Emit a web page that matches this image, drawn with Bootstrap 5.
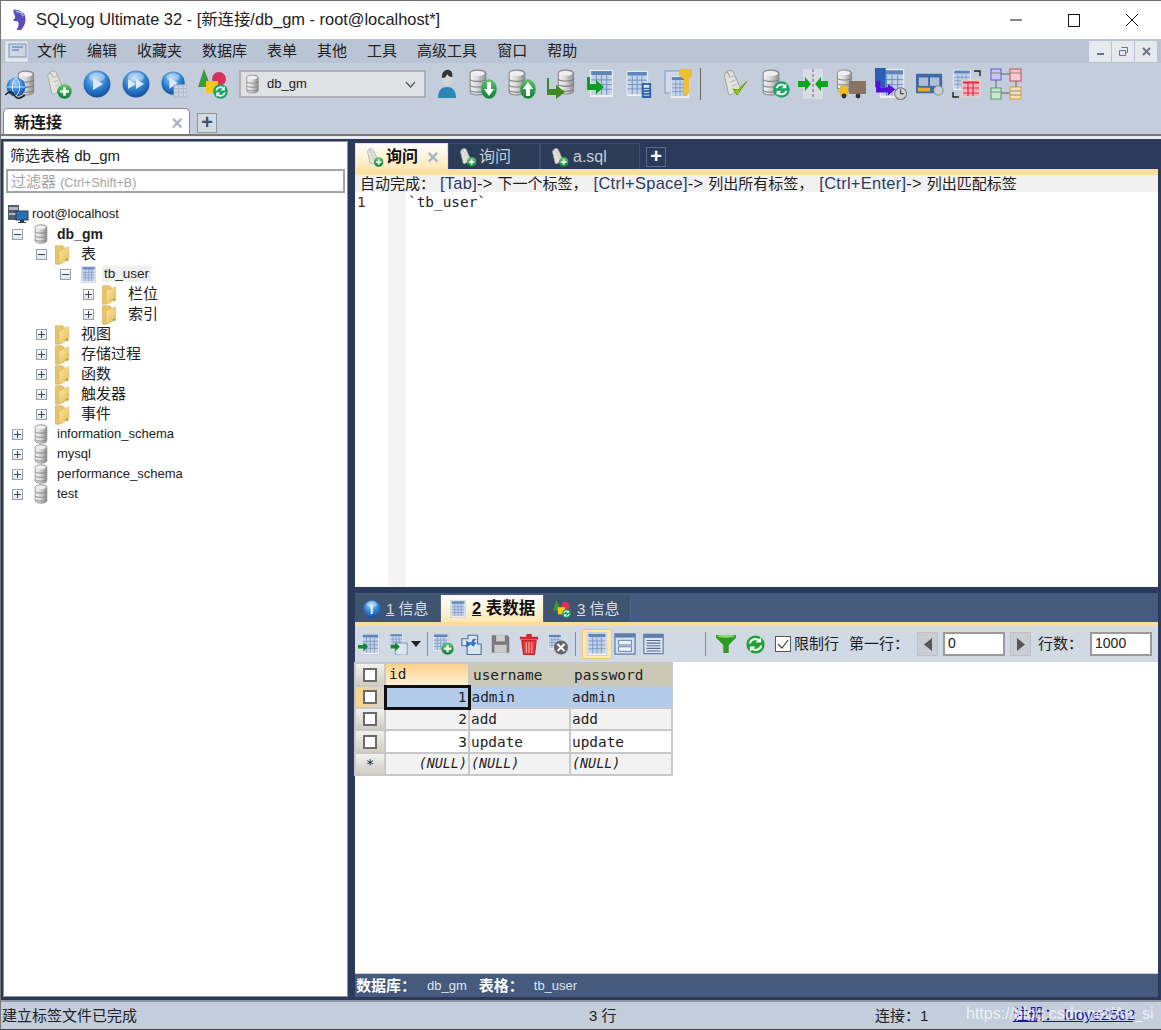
<!DOCTYPE html>
<html lang="zh-CN">
<head>
<meta charset="utf-8">
<title>SQLyog Ultimate 32</title>
<link href="https://cdn.jsdelivr.net/npm/bootstrap@5.3.0/dist/css/bootstrap.min.css" rel="stylesheet">
<style>
html,body{height:100%;overflow:hidden}
body{font-family:"Liberation Sans","Noto Sans CJK SC",sans-serif;font-size:15px;color:#1c1c1c;background:#c3cddb;line-height:1.2}
.defs-svg{display:block;height:0;width:0}
svg{flex:none}
.toolbar svg,.rtool svg,.tree svg,.qtab svg,.rtab svg{filter:blur(.35px)}
.app{height:1030px;width:1161px;border-top:1px solid #6d6d6d;border-left:1px solid #777;border-bottom:1px solid #444;position:relative}
.titlebar{height:38px;background:#fff;font-size:16.4px;color:#222}
.app-ico{margin:0 7px 0 9px}
.win-ctl{width:58px;height:38px}
.menubar{height:24px;background:#b9c4d4}
.menu-ico{margin:0 9px 0 4px}
.menus{gap:20px}
.menu-item{font-size:15px;color:#222}
.mdi-btn{width:22px;height:21px;background:#e6e9ee;color:#667;font-size:11px;margin-left:1px}
.toolbar{height:42px;background:#c3cddb;padding-left:4px;gap:11px}
.tb-group{gap:10px}
.tb-group2{gap:8px;margin-left:10px}
.tb-sep{width:1px;height:32px;background:#666;margin-left:-6px}
.combo{width:187px;height:28px;background:#dfe1e3;border:2px solid #adb0b4;font-size:13px;padding:0 8px 0 5px;color:#222;margin-right:-2px}
.conn-tabs{height:31px;background:#c3cddb;padding-left:2px;border-bottom:2px solid #777}
.conn-tab{width:187px;height:26px;background:#fff;border-radius:5px 5px 0 0;border:1px solid #888;border-bottom:0;font-weight:700;font-size:16px;padding:3px 6px 0 10px}
.tab-x{color:#a8b4c8;font-size:20px;font-weight:700;line-height:1}
.plus-btn{width:20px;height:20px;background:#d5dae2;border:1px solid #8e96a4;color:#3e4f6c;font-size:20px;line-height:16px;text-align:center;font-weight:700}
.plus-conn{margin:0 0 1px 7px}
.plus-q{margin:0 0 2px 6px;background:transparent;border-color:#5a6b88;color:#fff}
.workspace{height:864px;background:#2b3a5b;border-top:3px solid #e9ebef;padding:3px 3px 3px 2px;gap:7px}
.left-pane{width:345px;background:#fff;border:1px solid #8a93a3;color:#222;margin-top:-1px}
.filter-title{height:27px;padding:5px 0 0 6px;font-size:15px}
.filter-input{height:24px;margin:0 2px 0 2px;border:2px solid #a5a5a5;color:#a4a4a4;font-size:15px;padding:1px 3px 0;line-height:20px}
.filter-hint{font-size:12.6px}
.tree{padding-top:11px;font-size:13px}
.tree-row{height:20px}
.root-row{padding-left:3px}
.root-ico{margin-right:3px}
.lv1{padding-left:8px}.lv2{padding-left:32px}.lv3{padding-left:56px}.lv4{padding-left:79px}
.exp{width:11px;height:11px;border:1px solid #9aa2ad;background:linear-gradient(#fff,#dfe3e8);flex:none;position:relative;margin-right:11px}
.exp::before{content:"";position:absolute;left:1px;right:1px;top:4px;height:1px;background:#445}
.exp.pl::after{content:"";position:absolute;top:1px;bottom:1px;left:4px;width:1px;background:#445}
.fold-i{margin:0 10px 0 -4px}
.db-i{margin-right:9px}
.tb-i{margin:0 6px 0 -1px}
.cj{font-size:15px}
.dbname{font-size:14px}
.sel-name{background:#f0f0f0;padding:0 2px;font-size:13.5px}
.right-pane{width:803px;min-width:0}
.qtabs{height:27px;align-items:flex-end;flex:none}
.qtab{height:26px;border:1px solid #3e4e6c;border-bottom:0;background:#2c3c58;color:#c4ccd8;font-size:16px;gap:1px;padding-left:9px}
.qtab.on{background:linear-gradient(#fff,#fde7b2);color:#111;font-weight:700;border-color:#fde0a0}
.w93{width:93px}.w92{width:92px}.w100{width:100px}
.stripe{height:6px;background:#fde0a0;flex:none}
.hint{height:17px;background:#f1f1f1;font-size:15px;padding-left:5px;white-space:nowrap;line-height:17px;flex:none}
.lat{font-size:16.4px;letter-spacing:.3px}
.lat .br{color:#2a3a6a}
.hsp1{margin-left:5px}.hsp2{margin-left:6px}
.editor{height:395px;background:#fff;flex:none;font-family:"DejaVu Sans Mono",monospace;font-size:14.4px}
.gutter{width:33px;color:#642020;padding:2px 0 0 2px}
.marg{width:18px;background:#f4f4f4}
.code{padding:2px 0 0 2px;color:#222}
.divider{height:6px;background:#2b3a5b;flex:none}
.rtabs{height:29px;background:#455a7c;align-items:flex-end;flex:none}
.rtab{height:27px;background:#3f546f;color:#d7deea;font-size:15px;padding-left:8px;gap:5px;border-right:1px solid #4f6485}
.rtab.on{background:linear-gradient(#fff,#fde7b2);color:#111;font-weight:700;font-size:16.5px}
.w86{width:86px}.w103{width:103px}.w87{width:87px}
.stripe2{height:4px;background:#fddc96;flex:none}
.rtool{height:36px;background:#d1d9e5;flex:none;padding-left:3px;white-space:nowrap}
.rsep{width:1px;height:24px;background:#8a8f96}
.ml2{margin-left:2px}.ml3{margin-left:3px}.ml4{margin-left:4px}.ml5{margin-left:5px}.ml6{margin-left:6px}.ml7{margin-left:7px}.ml8{margin-left:8px}.ml10{margin-left:10px}.ml11{margin-left:11px}.ml12{margin-left:12px}.ml41{margin-left:41px}
.hl-btn{background:#fbe6b4;border:1px solid #eec873;padding:2px 2px;width:30px;height:30px}
.spin{width:21px;height:24px;background:#c9ccd0;border:1px solid #bdc0c4;flex:none}
.num-input{height:24px;background:#fff;border:2px solid #9a9a9a;font-size:14px;padding-left:3px;line-height:19px;color:#222}
.w62{width:62px}
.gridwrap{height:311px;background:#fff;flex:none}
.dgrid{width:317px;border-collapse:collapse;table-layout:fixed;font-family:"DejaVu Sans Mono",monospace;font-size:14.4px;margin:0 0 0 -1px;color:#222}
.c0{width:30px}.c1{width:84px}.c2{width:101px}.c3{width:102px}
.dgrid td,.dgrid th{border:2px solid #c8c8c8;height:22px;padding:0 1px;font-weight:400;line-height:18px;overflow:hidden;vertical-align:middle}
.dgrid thead th{height:23px}
.dgrid tbody tr:nth-child(3) td{height:23px}
.rh,.dgrid th.rh{background:linear-gradient(#f2f1ee,#cfcdc4);text-align:center}
.sel-row td.rh.cur{background:linear-gradient(90deg,#fbd48a,#d7d5cc)}
.chk{display:block;width:14px;height:14px;background:#fff;border:2px solid #6a6a6a;margin:0 auto}
.dgrid th.colh{background:#cbc8b8;padding-left:3px}
.dgrid th.colh.act{background:linear-gradient(#fbd18a,#fff1d6)}
.sel-row td{background:#b4ccec}
.dgrid td.cell-act{border:3px solid #111;background:#b4ccec}
.alt td{background:#f2f2f2}
.alt td.rh{background:linear-gradient(#f2f1ee,#cfcdc4)}
.nul{font-style:italic;font-size:13.4px}
.rfoot{height:24px;background:#455a7c;color:#dfe5ee;font-size:13px;flex:none;border-top:1px solid #c9ced6;padding-left:1px}
.rfoot b{font-size:15px;color:#fff}
.statusbar{height:29px;background:#c3cddb;border-top:2px solid #8d96a4;font-size:15px;color:#222}
.st-a{width:588px;padding-left:1px}.st-b{width:286px}.st-c{width:138px}
.reg-link{color:#1a1a9c;text-decoration:underline;font-size:15.5px}
.wm{position:absolute;left:965px;top:1003px;color:rgba(255,255,255,.72);font-size:16px;white-space:nowrap}
</style>
</head>
<body>
<svg class="defs-svg" width="0" height="0" aria-hidden="true">
<defs>
<linearGradient id="gs" x1="0" x2="1" y1="0" y2="0"><stop offset="0" stop-color="#f2f2f2"/><stop offset=".45" stop-color="#d9d9d9"/><stop offset="1" stop-color="#8e8e8e"/></linearGradient>
<radialGradient id="gb" cx=".45" cy=".3" r=".8"><stop offset="0" stop-color="#a6d4f7"/><stop offset=".5" stop-color="#2f7fd0"/><stop offset="1" stop-color="#0d3f8e"/></radialGradient>
<linearGradient id="gy" x1="0" x2="1" y1="0" y2="1"><stop offset="0" stop-color="#fbe9a6"/><stop offset="1" stop-color="#e5b850"/></linearGradient>
<linearGradient id="gg" x1="0" x2="0" y1="0" y2="1"><stop offset="0" stop-color="#62c36c"/><stop offset="1" stop-color="#0c7f38"/></linearGradient>
</defs>
<symbol id="db" viewBox="0 0 16 24"><path d="M1 4c0-2 3-3 7-3s7 1 7 3v16c0 2-3 3-7 3s-7-1-7-3z" fill="url(#gs)" stroke="#8c8c8c"/><ellipse cx="8" cy="4" rx="6" ry="2.2" fill="#efefef"/><path d="M1 9.5c2 2 12 2 14 0M1 14.5c2 2 12 2 14 0M1 19c2 2 12 2 14 0" fill="none" stroke="#7d7d7d"/></symbol>
<symbol id="ball" viewBox="0 0 28 28"><circle cx="14" cy="14" r="13.5" fill="url(#gb)"/><ellipse cx="14" cy="7" rx="8" ry="4.5" fill="#fff" opacity=".35"/></symbol>
<symbol id="bplus" viewBox="0 0 14 14"><circle cx="7" cy="7" r="6.8" fill="url(#gg)"/><path d="M3 7h8M7 3v8" stroke="#fff" stroke-width="2.4"/></symbol>
<symbol id="bdown" viewBox="0 0 16 20"><ellipse cx="8" cy="10" rx="7.8" ry="9.8" fill="url(#gg)"/><path d="M6 3h4v7h3l-5 7-5-7h3z" fill="#fff"/></symbol>
<symbol id="bup" viewBox="0 0 16 20"><ellipse cx="8" cy="10" rx="7.8" ry="9.8" fill="url(#gg)"/><path d="M6 17h4v-7h3L8 3l-5 7h3z" fill="#fff"/></symbol>
<symbol id="bref" viewBox="0 0 14 14"><circle cx="7" cy="7" r="6.8" fill="#22a06a"/><path d="M3 6a4 4 0 0 1 7-1.5M11 8a4 4 0 0 1-7 1.5" fill="none" stroke="#e8fff0" stroke-width="1.6"/><path d="M11 2v4H7zM3 12V8h4z" fill="#e8fff0"/></symbol>
<symbol id="tbl" viewBox="0 0 24 28"><rect x=".5" y=".5" width="23" height="27" fill="#eef1f6" stroke="#c9ced6"/><rect x="2" y="2" width="20" height="4" fill="#5f86bb"/><path d="M2 6h20v19H2z" fill="#c3d2e8"/><path d="M2 10.5h20M2 15h20M2 19.5h20M7 6v19M12 6v19M17 6v19" stroke="#6d8fbd" stroke-width=".9"/></symbol>
<symbol id="scroll" viewBox="0 0 18 26"><path d="M3 3c2-3 6-2 7 0l6 14c1 3-2 5-4 4L8 24c-2 1-3-1-3-2L2 9C1 7 1 5 3 3z" fill="#e2e2dd" stroke="#a8a8a8"/><path d="M3 3c2 0 3 2 3 4" fill="none" stroke="#999"/><path d="M6 8l5-2M7 12l5-2M9 16l4-2" stroke="#bbb"/></symbol>
<symbol id="fold" viewBox="0 0 18 24"><path d="M1 2h8l2 2v16l-6 3H1z" fill="#e9c565" stroke="#c7a044" stroke-width=".6"/><path d="M5 8l11-5v15l-11 5z" fill="url(#gy)" stroke="#d2aa4d" stroke-width=".5"/><circle cx="14.5" cy="18" r="1.2" fill="#55a955"/></symbol>
<symbol id="srv" viewBox="0 0 22 20"><rect x="1" y="1" width="11" height="15" fill="#555d68"/><rect x="2" y="3" width="9" height="3" fill="#aeb5be"/><rect x="2" y="9" width="9" height="2" fill="#aeb5be"/><rect x="9" y="7" width="12" height="9" fill="#2b6fb7" stroke="#2a3c55"/><path d="M13 16h4v2h2v1h-8v-1h2z" fill="#2a3c55"/></symbol>

<symbol id="i-conn" viewBox="0 0 30 30"><use href="#db" x="12" y="1" width="18" height="26"/><circle cx="11" cy="18" r="9.5" fill="url(#gb)"/><path d="M2 18h18M11 9c-5 5-5 13 0 18M11 9c5 5 5 13 0 18" stroke="#e8f2ff" fill="none" stroke-width=".9"/><path d="M0 26c5-5 8-3 10 1s6 2 10-1" stroke="#222" fill="none" stroke-width="1.6"/></symbol>
<symbol id="i-newq" viewBox="0 0 26 30"><use href="#scroll" x="0" y="1" width="19" height="26"/><use href="#bplus" x="11" y="15" width="15" height="15"/></symbol>
<symbol id="i-play" viewBox="0 0 28 28"><use href="#ball" width="28" height="28"/><path d="M10 8l10 6-10 6z" fill="#dfeaf8"/></symbol>
<symbol id="i-play2" viewBox="0 0 28 28"><use href="#ball" width="28" height="28"/><path d="M6 9l8 5-8 5zM14 9l8 5-8 5z" fill="#dfeaf8"/></symbol>
<symbol id="i-playt" viewBox="0 0 28 28"><use href="#ball" x="0" y="0" width="26" height="26"/><path d="M9 7l9 6-9 6z" fill="#dfeaf8"/><rect x="14" y="15" width="14" height="13" fill="#c9d4e6" stroke="#a9b4c8"/><path d="M14 19h14M14 23h14M19 15v13M24 15v13" stroke="#a9b4c8"/></symbol>
<symbol id="i-shape" viewBox="0 0 30 30"><path d="M6 0l7 18H0z" fill="#3a9a3c"/><circle cx="21" cy="10" r="7" fill="#d8315a"/><rect x="8" y="12" width="12" height="12" fill="#f5c61b"/><use href="#bref" x="15" y="15" width="15" height="15"/></symbol>
<symbol id="i-user" viewBox="0 0 24 30"><path d="M3 29c0-8 4-11 9-11s9 3 9 11z" fill="#2f86b5"/><ellipse cx="12" cy="10" rx="5" ry="7.5" fill="#d5d5d5"/><path d="M7 9c-1-6 4-9 7-8s4 4 3 7c-3 0-4-2-5-3-1 3-2 4-5 4z" fill="#333"/></symbol>
<symbol id="i-dbdown" viewBox="0 0 28 30"><use href="#db" width="18" height="27"/><use href="#bdown" x="12" y="10" width="16" height="20"/></symbol>
<symbol id="i-dbup" viewBox="0 0 28 30"><use href="#db" width="18" height="27"/><use href="#bup" x="12" y="10" width="16" height="20"/></symbol>
<symbol id="i-dbarr" viewBox="0 0 28 30"><use href="#db" x="10" width="18" height="26"/><path d="M2 9v11h7v-4l9 7-9 7v-4H0V9z" fill="#3f8a1e"/></symbol>
<symbol id="i-tbarr" viewBox="0 0 28 30"><use href="#tbl" x="3" y="0" width="25" height="29"/><path d="M1 8h3v7h6v-4l8 7-8 7v-4H1z" fill="#0f9c22"/></symbol>
<symbol id="i-tbcalc" viewBox="0 0 30 30"><use href="#tbl" width="26" height="29"/><rect x="18" y="14" width="10" height="16" fill="#2d62a8"/><rect x="20" y="16" width="6" height="3" fill="#dfe9f7"/><path d="M20 21h6M20 24h6M20 27h6" stroke="#e3e9f3"/></symbol>
<symbol id="i-tbkey" viewBox="0 0 30 30"><rect x="1" y="2" width="20" height="22" fill="#cfdbeb" stroke="#7e9ac2"/><use href="#tbl" x="6" y="6" width="20" height="24"/><path d="M15 0h13v7l-3 3v14l-3 3-2-2V10l-5-3z" fill="#edbf32"/></symbol>
<symbol id="i-check" viewBox="0 0 28 30"><use href="#scroll" x="0" width="19" height="28"/><path d="M10 20l4 6 10-14-9 9z" fill="#8fc820" stroke="#6ea000"/></symbol>
<symbol id="i-dbref" viewBox="0 0 30 30"><use href="#db" x="2" width="18" height="27"/><use href="#bref" x="13" y="12" width="17" height="17"/></symbol>
<symbol id="i-sync" viewBox="0 0 30 30"><rect x="5" width="20" height="30" fill="#d8dde4"/><path d="M15 0v30" stroke="#667" stroke-dasharray="3 2"/><path d="M0 12h7V8l6 7-6 7v-4H0zM30 12h-7V8l-6 7 6 7v-4h7z" fill="#0ea51c"/></symbol>
<symbol id="i-truck" viewBox="0 0 30 30"><use href="#db" x="0" y="0" width="17" height="24"/><rect x="13" y="12" width="17" height="13" fill="#8a7563"/><path d="M4 17h8v10H4z" fill="#f0bd1e"/><circle cx="8" cy="27" r="2.4" fill="#333"/><circle cx="22" cy="27" r="2.4" fill="#333"/></symbol>
<symbol id="i-sched" viewBox="0 0 30 30"><use href="#tbl" x="2" width="28" height="29"/><rect width="10" height="18" fill="#2a5fb5"/><path d="M1 12h4v6h7v-3l7 5-7 6v-3H1z" fill="#5010d8"/><circle cx="24" cy="24" r="5.5" fill="#cfd2d6" stroke="#777"/><path d="M24 20v4h3" stroke="#444" fill="none"/></symbol>
<symbol id="i-card" viewBox="0 0 30 26"><rect y="2" width="28" height="21" rx="1" fill="#3f6aa6"/><rect x="3" y="6" width="10" height="9" fill="#aebfd6"/><rect x="15" y="6" width="10" height="9" fill="#aebfd6"/><rect x="2" y="17" width="13" height="4" fill="#e5ae26"/><circle cx="24" cy="20" r="5" fill="#c8ccd2" stroke="#888"/></symbol>
<symbol id="i-red" viewBox="0 0 30 30"><use href="#tbl" x="0" width="20" height="22"/><rect x="10" y="11" width="18" height="17" fill="#f5b3bd" stroke="#ddd"/><path d="M11 14h16M11 19h16M11 24h16M16 13v14M21 13v14M11 13h16" stroke="#e72b3c" stroke-width="1.2"/><path d="M22 2h6v5M1 23v5h6" fill="none" stroke="#222" stroke-width="1.4"/></symbol>
<symbol id="i-schema" viewBox="0 0 32 32"><rect x="1" y="1" width="10" height="11" fill="#c8c6ef" stroke="#5f57d2"/><rect x="20" y="1" width="11" height="12" fill="#f3c9cd" stroke="#c64d56"/><rect x="1" y="20" width="10" height="11" fill="#cbe6d2" stroke="#4ca266"/><rect x="20" y="19" width="11" height="12" fill="#f8dfb4" stroke="#e09a2f"/><path d="M11 6h9M6 12v8M26 13v6M11 25h9" stroke="#666"/><path d="M1 5h10M20 5h11M1 24h10M20 23h11M20 27h11" stroke="#888"/></symbol>

<symbol id="r-add" viewBox="0 0 24 24"><use href="#tbl" x="3" width="21" height="24"/><path d="M0 13h6v-3l5 5-5 5v-3H0z" fill="#0e8c26"/></symbol>
<symbol id="r-copy" viewBox="0 0 24 24"><use href="#tbl" x="0" width="20" height="18"/><rect x="9" y="11" width="13" height="13" fill="#dfe5ee" stroke="#7f94b4"/><path d="M4 13h5v-3l5 5-5 5v-3H4z" fill="#0e8c26"/></symbol>
<symbol id="r-plus" viewBox="0 0 24 24"><use href="#tbl" width="19" height="21"/><use href="#bplus" x="10" y="10" width="14" height="14"/></symbol>
<symbol id="r-dup" viewBox="0 0 24 24"><path d="M8 2h11v10h4v12H7V14H1V6h7z" fill="#dbe4f1" stroke="#4c6d9e" stroke-width="1.2"/><path d="M6 14v-6l6 4-6 4" fill="#2f6fbd"/><path d="M16 6c-3 0-4 2-4 4h-3l5 5 4-5h-3c0-2 1-3 3-3z" fill="#3b78bb"/></symbol>
<symbol id="r-save" viewBox="0 0 24 24"><path d="M2 2h18l2 2v18H2z" fill="#7b7b7b"/><rect x="7" y="2" width="10" height="7" fill="#cfcfcf"/><rect x="5" y="13" width="14" height="9" fill="#cbcbcb"/></symbol>
<symbol id="r-trash" viewBox="0 0 22 24"><path d="M8 1h6v3h7v3H1V4h7z" fill="#d9252a"/><path d="M3 8h16l-2 16H5z" fill="#e8343a" stroke="#b31a1e"/><path d="M8 10v12M11 10v12M14 10v12" stroke="#fbb" stroke-width="1.2"/></symbol>
<symbol id="r-x" viewBox="0 0 24 24"><use href="#tbl" width="18" height="19"/><circle cx="16" cy="16" r="8" fill="#666"/><path d="M12 12l8 8M20 12l-8 8" stroke="#fff" stroke-width="2.2"/></symbol>
<symbol id="r-form" viewBox="0 0 24 24"><rect x="1" y="1" width="22" height="22" fill="#d5dff0" stroke="#5f7fa8" stroke-width="1.4"/><rect x="1" y="1" width="22" height="4" fill="#5f7fa8"/><rect x="5" y="8" width="14" height="5" fill="#eef3fb" stroke="#5f7fa8"/><rect x="5" y="15" width="14" height="5" fill="#eef3fb" stroke="#5f7fa8"/></symbol>
<symbol id="r-text" viewBox="0 0 24 24"><rect x="1" y="1" width="22" height="22" fill="#dde5f1" stroke="#5f7fa8" stroke-width="1.4"/><rect x="1" y="1" width="22" height="4" fill="#5f7fa8"/><path d="M4 8h16M4 11h16M4 14h16M4 17h16M4 20h16" stroke="#56708f" stroke-width="1.2"/></symbol>
<symbol id="r-funnel" viewBox="0 0 22 22"><path d="M0 1h22v3l-8 8v9H8v-9L0 4z" fill="#2e9a1f"/><ellipse cx="11" cy="2.5" rx="10" ry="1.7" fill="#8ed86f"/></symbol>
<symbol id="r-refresh" viewBox="0 0 20 20"><circle cx="10" cy="10" r="9.6" fill="#21a03a"/><path d="M4 9a6 6 0 0 1 10-3M16 11a6 6 0 0 1-10 3" fill="none" stroke="#eaffea" stroke-width="2.2"/><path d="M16 2v6h-6zM4 18v-6h6z" fill="#eaffea"/></symbol>
</svg>

<div class="app d-flex flex-column">
  <header class="titlebar d-flex align-items-center">
    <svg class="app-ico" width="19" height="24" viewBox="0 0 20 24"><path d="M4 1c5 0 11 3 12 7s0 9-3 13c-1 2-4 2-6 1 2-3 3-6 1-9-2 1-4 0-5-1 2-1 3-2 2-5-1-2-2-4-1-6z" fill="#5a4fb8"/><path d="M6 3c4 0 7 2 8 5" stroke="#b6b2e6" fill="none" stroke-width="1.5"/></svg>
    <span>SQLyog Ultimate 32 - [新连接/db_gm - root@localhost*]</span>
    <div class="ms-auto d-flex align-items-center">
      <div class="win-ctl d-flex align-items-center justify-content-center"><svg width="12" height="2"><path d="M0 1h12" stroke="#111"/></svg></div>
      <div class="win-ctl d-flex align-items-center justify-content-center"><svg width="12" height="13"><rect x=".5" y=".5" width="11" height="12" fill="none" stroke="#111"/></svg></div>
      <div class="win-ctl d-flex align-items-center justify-content-center"><svg width="14" height="14"><path d="M1 1l12 12M13 1L1 13" stroke="#111"/></svg></div>
    </div>
  </header>

  <nav class="menubar d-flex align-items-center">
    <svg class="menu-ico" width="23" height="21" viewBox="0 0 23 21"><rect x="1" y="1" width="21" height="19" fill="#dfe5ee" stroke="#eef1f5"/><rect x="4" y="3" width="17" height="13" fill="#cdd6e3" stroke="#7f8fa8"/><path d="M7 6h11M7 9h7" stroke="#3f6fb0"/></svg>
    <div class="d-flex menus">
      <span class="menu-item">文件</span><span class="menu-item">编辑</span><span class="menu-item">收藏夹</span><span class="menu-item">数据库</span><span class="menu-item">表单</span><span class="menu-item">其他</span><span class="menu-item">工具</span><span class="menu-item">高级工具</span><span class="menu-item">窗口</span><span class="menu-item">帮助</span>
    </div>
    <div class="ms-auto d-flex me-1">
      <div class="mdi-btn d-flex align-items-center justify-content-center"><svg width="9" height="9"><rect x="1" y="6" width="7" height="2" fill="#6c7480"/></svg></div>
      <div class="mdi-btn d-flex align-items-center justify-content-center"><svg width="11" height="11"><path d="M3.5 1.5h6v5h-2M1.5 4.5h6v5h-6z" fill="none" stroke="#6c7480"/></svg></div>
      <div class="mdi-btn d-flex align-items-center justify-content-center"><svg width="9" height="9"><path d="M1 1l7 7M8 1L1 8" stroke="#6c7480" stroke-width="2"/></svg></div>
    </div>
  </nav>

  <div class="toolbar d-flex align-items-center">
    <svg width="30" height="30"><use href="#i-conn"/></svg>
    <svg width="26" height="30"><use href="#i-newq"/></svg>
    <svg width="28" height="28"><use href="#i-play"/></svg>
    <svg width="28" height="28"><use href="#i-play2"/></svg>
    <svg width="26" height="28"><use href="#i-playt"/></svg>
    <svg width="30" height="30"><use href="#i-shape"/></svg>
    <div class="combo d-flex align-items-center">
      <svg class="me-2" width="13" height="20"><use href="#db"/></svg><span>db_gm</span>
      <svg class="ms-auto" width="11" height="7"><path d="M1 1l4.5 5L10 1" fill="none" stroke="#555" stroke-width="1.2"/></svg>
    </div>
    <div class="d-flex align-items-center tb-group">
      <svg width="24" height="30"><use href="#i-user"/></svg>
      <svg width="28" height="30"><use href="#i-dbdown"/></svg>
      <svg width="30" height="30"><use href="#i-dbup"/></svg>
      <svg width="28" height="30"><use href="#i-dbarr"/></svg>
      <svg width="30" height="30"><use href="#i-tbarr"/></svg>
      <svg width="28" height="30"><use href="#i-tbcalc"/></svg>
      <svg width="32" height="30"><use href="#i-tbkey"/></svg>
    </div>
    <span class="tb-sep"></span>
    <div class="d-flex align-items-center tb-group2">
      <svg width="30" height="30"><use href="#i-check"/></svg>
      <svg width="30" height="30"><use href="#i-dbref"/></svg>
      <svg width="30" height="30"><use href="#i-sync"/></svg>
      <svg width="30" height="30"><use href="#i-truck"/></svg>
      <svg width="34" height="32"><use href="#i-sched"/></svg>
      <svg width="28" height="26"><use href="#i-card"/></svg>
      <svg width="30" height="30"><use href="#i-red"/></svg>
      <svg width="32" height="32"><use href="#i-schema"/></svg>
    </div>
  </div>

  <div class="conn-tabs d-flex align-items-end">
    <div class="conn-tab d-flex align-items-center justify-content-between"><span>新连接</span><span class="tab-x">×</span></div>
    <div class="plus-btn plus-conn">+</div>
  </div>

  <main class="workspace d-flex">
    <aside class="left-pane d-flex flex-column">
      <div class="filter-title">筛选表格 db_gm</div>
      <div class="filter-input">过滤器 <span class="filter-hint">(Ctrl+Shift+B)</span></div>
      <div class="tree">
        <div class="tree-row d-flex align-items-center root-row"><svg class="root-ico" width="22" height="20"><use href="#srv"/></svg><span>root@localhost</span></div>
        <div class="tree-row d-flex align-items-center lv1"><i class="exp"></i><svg class="db-i" width="14" height="20"><use href="#db"/></svg><b class="dbname">db_gm</b></div>
        <div class="tree-row d-flex align-items-center lv2"><i class="exp"></i><svg class="fold-i" width="17" height="21"><use href="#fold"/></svg><span class="cj">表</span></div>
        <div class="tree-row d-flex align-items-center lv3"><i class="exp"></i><svg class="tb-i" width="15" height="17"><use href="#tbl"/></svg><span class="sel-name">tb_user</span></div>
        <div class="tree-row d-flex align-items-center lv4"><i class="exp pl"></i><svg class="fold-i" width="17" height="21"><use href="#fold"/></svg><span class="cj">栏位</span></div>
        <div class="tree-row d-flex align-items-center lv4"><i class="exp pl"></i><svg class="fold-i" width="17" height="21"><use href="#fold"/></svg><span class="cj">索引</span></div>
        <div class="tree-row d-flex align-items-center lv2"><i class="exp pl"></i><svg class="fold-i" width="17" height="21"><use href="#fold"/></svg><span class="cj">视图</span></div>
        <div class="tree-row d-flex align-items-center lv2"><i class="exp pl"></i><svg class="fold-i" width="17" height="21"><use href="#fold"/></svg><span class="cj">存储过程</span></div>
        <div class="tree-row d-flex align-items-center lv2"><i class="exp pl"></i><svg class="fold-i" width="17" height="21"><use href="#fold"/></svg><span class="cj">函数</span></div>
        <div class="tree-row d-flex align-items-center lv2"><i class="exp pl"></i><svg class="fold-i" width="17" height="21"><use href="#fold"/></svg><span class="cj">触发器</span></div>
        <div class="tree-row d-flex align-items-center lv2"><i class="exp pl"></i><svg class="fold-i" width="17" height="21"><use href="#fold"/></svg><span class="cj">事件</span></div>
        <div class="tree-row d-flex align-items-center lv1"><i class="exp pl"></i><svg class="db-i" width="14" height="20"><use href="#db"/></svg><span>information_schema</span></div>
        <div class="tree-row d-flex align-items-center lv1"><i class="exp pl"></i><svg class="db-i" width="14" height="20"><use href="#db"/></svg><span>mysql</span></div>
        <div class="tree-row d-flex align-items-center lv1"><i class="exp pl"></i><svg class="db-i" width="14" height="20"><use href="#db"/></svg><span>performance_schema</span></div>
        <div class="tree-row d-flex align-items-center lv1"><i class="exp pl"></i><svg class="db-i" width="14" height="20"><use href="#db"/></svg><span>test</span></div>
      </div>
    </aside>

    <section class="right-pane d-flex flex-column">
      <div class="qtabs d-flex">
        <div class="qtab on w93 d-flex align-items-center"><svg width="20" height="20"><use href="#i-newq"/></svg><span>询问</span><span class="tab-x ms-2">×</span></div>
        <div class="qtab w92 d-flex align-items-center"><svg width="20" height="20"><use href="#i-newq"/></svg><span>询问</span></div>
        <div class="qtab w100 d-flex align-items-center"><svg width="20" height="20"><use href="#i-newq"/></svg><span class="ml2">a.sql</span></div>
        <div class="plus-btn plus-q">+</div>
      </div>
      <div class="stripe"></div>
      <div class="hint">自动完成：<span class="lat hsp1"><span class="br">[Tab]</span>-&gt; </span>下一个标签，<span class="lat hsp2"><span class="br">[Ctrl+Space]</span>-&gt; </span>列出所有标签，<span class="lat hsp2"><span class="br">[Ctrl+Enter]</span>-&gt; </span>列出匹配标签</div>
      <div class="editor d-flex">
        <div class="gutter">1</div>
        <div class="marg"></div>
        <div class="code">`tb_user`</div>
      </div>
      <div class="divider"></div>
      <div class="rtabs d-flex">
        <div class="rtab w86 d-flex align-items-center"><svg width="18" height="18"><use href="#ball"/><text x="7" y="14" font-size="12" font-weight="700" fill="#fff">i</text></svg><span><u>1</u> 信息</span></div>
        <div class="rtab on w103 d-flex align-items-center"><svg width="18" height="18"><use href="#tbl"/></svg><span><u>2</u> 表数据</span></div>
        <div class="rtab w87 d-flex align-items-center"><svg width="20" height="18"><use href="#i-shape"/></svg><span><u>3</u> 信息</span></div>
      </div>
      <div class="stripe2"></div>
      <div class="rtool d-flex align-items-center">
        <svg width="22" height="22"><use href="#r-add"/></svg>
        <svg width="22" height="22" class="ml7"><use href="#r-copy"/></svg>
        <svg width="10" height="6" class="ml2"><path d="M0 0h10L5 6z" fill="#222"/></svg>
        <span class="rsep ml6"></span>
        <svg width="22" height="22" class="ml4"><use href="#r-plus"/></svg>
        <svg width="21" height="22" class="ml7"><use href="#r-dup"/></svg>
        <svg width="21" height="22" class="ml8"><use href="#r-save"/></svg>
        <svg width="20" height="22" class="ml8"><use href="#r-trash"/></svg>
        <svg width="21" height="22" class="ml8"><use href="#r-x"/></svg>
        <span class="rsep ml7"></span>
        <span class="hl-btn d-flex ml6"><svg width="24" height="24"><use href="#tbl"/></svg></span>
        <svg width="22" height="22" class="ml2"><use href="#r-form"/></svg>
        <svg width="21" height="22" class="ml7"><use href="#r-text"/></svg>
        <span class="rsep ml41"></span>
        <svg width="20" height="20" class="ml10"><use href="#r-funnel"/></svg>
        <svg width="19" height="19" class="ml10"><use href="#r-refresh"/></svg>
        <svg width="16" height="16" class="ml10"><rect x=".5" y=".5" width="15" height="15" fill="#fff" stroke="#555"/><path d="M3 8l4 4 6-8" fill="none" stroke="#444" stroke-width="1.2"/></svg>
        <span class="ml3">限制行</span>
        <span class="ml10">第一行：</span>
        <span class="spin d-flex align-items-center justify-content-center ml8"><svg width="8" height="13"><path d="M8 0v13L0 6.5z" fill="#555"/></svg></span>
        <span class="num-input w62 ml5">0</span>
        <span class="spin d-flex align-items-center justify-content-center ml5"><svg width="8" height="13"><path d="M0 0v13l8-6.5z" fill="#555"/></svg></span>
        <span class="ml7">行数：</span>
        <span class="num-input w62 ml7">1000</span>
      </div>
      <div class="gridwrap">
        <table class="dgrid">
          <colgroup><col class="c0"><col class="c1"><col class="c2"><col class="c3"></colgroup>
          <thead><tr><th class="rh"><span class="chk"></span></th><th class="colh act">id</th><th class="colh">username</th><th class="colh">password</th></tr></thead>
          <tbody>
            <tr class="sel-row"><td class="rh cur"><span class="chk"></span></td><td class="cell-act text-end">1</td><td>admin</td><td>admin</td></tr>
            <tr class="alt"><td class="rh"><span class="chk"></span></td><td class="text-end">2</td><td>add</td><td>add</td></tr>
            <tr><td class="rh"><span class="chk"></span></td><td class="text-end">3</td><td>update</td><td>update</td></tr>
            <tr class="alt"><td class="rh">*</td><td class="text-end nul">(NULL)</td><td class="nul">(NULL)</td><td class="nul">(NULL)</td></tr>
          </tbody>
        </table>
      </div>
      <div class="rfoot d-flex align-items-center"><b>数据库：</b><span class="ml11">db_gm</span><b class="ml12">表格：</b><span class="ml10">tb_user</span></div>
    </section>
  </main>

  <footer class="statusbar d-flex align-items-center">
    <span class="st-a">建立标签文件已完成</span>
    <span class="st-b">3 行</span>
    <span class="st-c">连接：1</span>
    <a class="reg-link" href="#">注册： luoye2562</a>
  </footer>
  <div class="wm">https://blog.csdn.net/Aa_si</div>
</div>
<script src="https://cdn.jsdelivr.net/npm/bootstrap@5.3.0/dist/js/bootstrap.bundle.min.js"></script>
</body>
</html>
